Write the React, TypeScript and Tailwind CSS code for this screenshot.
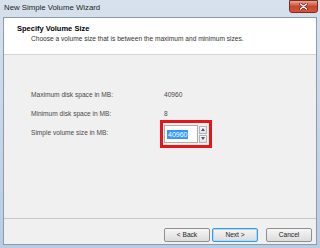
import React from 'react';

const font = { fontFamily: '"Liberation Sans", Arial, sans-serif' };

const Button = ({ label, primary }: { label: string; primary?: boolean }) => (
  <div
    className={`w-[46px] h-[14px] flex items-center justify-center rounded-[2px] border text-[6.6px] text-[#222] bg-gradient-to-b from-[#f6f6f6] to-[#dcdcdc] ${
      primary ? 'border-[#3c9ad8] shadow-[inset_0_0_0_1px_#a8dcf5]' : 'border-[#8e8f8f]'
    }`}
  >
    {label}
  </div>
);

const App = () => {
  return (
    <div className="w-[320px] h-[248px] flex flex-col bg-gradient-to-b from-[#d6e1ec] to-[#b7cde4] overflow-hidden" style={font}>
      {/* title bar */}
      <div className="h-[17px] flex items-start justify-between pl-[4px] pr-[2px]">
        <span className="text-[7.8px] leading-[16px] text-[#1e1e1e]">New Simple Volume Wizard</span>
        <div className="w-[29px] h-[13px] rounded-b-[3px] border border-[#7a2a1f] bg-gradient-to-b from-[#e7a597] via-[#c9462c] to-[#d6553a] flex items-center justify-center">
          <svg width="9" height="7" viewBox="0 0 9 7">
            <path d="M1.5 1 L7.5 6 M7.5 1 L1.5 6" stroke="#5a1a10" strokeWidth="2.6" strokeLinecap="round" />
            <path d="M1.5 1 L7.5 6 M7.5 1 L1.5 6" stroke="#ffffff" strokeWidth="1.4" strokeLinecap="round" />
          </svg>
        </div>
      </div>

      {/* dialog client area */}
      <div className="flex-1 mx-[3px] mb-[3px] border border-[#8c9aab] flex flex-col bg-[#f0f0f0]">
        <div className="h-[37px] bg-white border-b border-[#d5d5d5] pl-[13px] pt-[6px]">
          <div className="text-[7.5px] font-bold leading-[10px] text-black">Specify Volume Size</div>
          <div className="text-[6.6px] leading-[10px] text-[#333] pl-[14px]">
            Choose a volume size that is between the maximum and minimum sizes.
          </div>
        </div>

        <div className="flex-1 pl-[27px] pt-[35px] text-[6.6px] text-[#4a4a4a]">
          <div className="grid grid-cols-[133px_1fr] gap-y-[9px] items-center">
            <span className="leading-[10px]">Maximum disk space in MB:</span>
            <span className="leading-[10px]">40960</span>
            <span className="leading-[10px]">Minimum disk space in MB:</span>
            <span className="leading-[10px]">8</span>
            <span className="leading-[10px]">Simple volume size in MB:</span>
            <div className="relative w-[52px] h-[10px]">
              <div className="absolute -left-[4px] -top-[8px] w-[52px] h-[28px] border-[3px] border-[#e8141b] flex items-center pl-[1px] pr-[2px] gap-[1px]">
                <div className="w-[35px] h-[18px] bg-white border border-[#abadb3] flex items-center pl-[2px]">
                  <span className="bg-[#3399ff] text-white px-[1px] leading-[9px] text-[7px]">40960</span>
                </div>
                <div className="flex flex-col gap-[1px]">
                  <div className="w-[8px] h-[8px] border border-[#b5b5b5] bg-gradient-to-b from-[#f8f8f8] to-[#e2e2e2] flex items-center justify-center">
                    <svg width="4" height="3" viewBox="0 0 4 3"><path d="M0 3 L2 0 L4 3 Z" fill="#3d5a80" /></svg>
                  </div>
                  <div className="w-[8px] h-[8px] border border-[#b5b5b5] bg-gradient-to-b from-[#f8f8f8] to-[#e2e2e2] flex items-center justify-center">
                    <svg width="4" height="3" viewBox="0 0 4 3"><path d="M0 0 L4 0 L2 3 Z" fill="#3d5a80" /></svg>
                  </div>
                </div>
              </div>
            </div>
          </div>
        </div>

        <div className="border-t border-[#c8c8c8] h-[26px] flex items-start justify-end pt-[9px] pr-[4px]">
          <Button label="< Back" />
          <div className="ml-[2px]">
            <Button label="Next >" primary />
          </div>
          <div className="ml-[8px]">
            <Button label="Cancel" />
          </div>
        </div>
      </div>
    </div>
  );
};

export default App;
